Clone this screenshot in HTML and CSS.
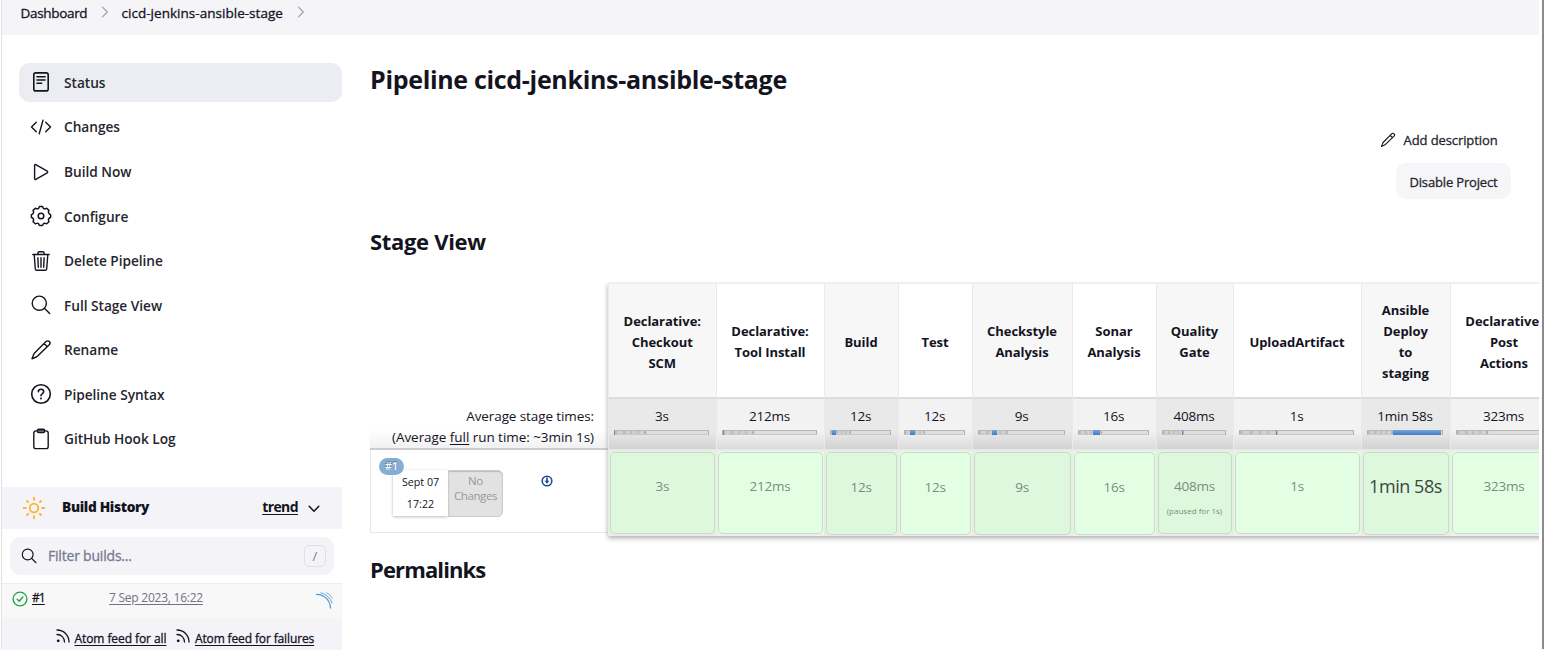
FILE: index.html
```html
<!DOCTYPE html>
<html lang="en">
<head>
<meta charset="utf-8">
<title>cicd-jenkins-ansible-stage</title>
<link rel="stylesheet" href="styles.css">
</head>
<body>
<div class="page">
  <nav class="crumbs">
    <span class="crumb-home">Dashboard</span>
    <svg class="crumb-sep" width="8" height="12" viewBox="0 0 8 12"><path d="M1.5 1.2 6.3 6 1.5 10.8"/></svg>
    <span class="crumb-job">cicd-jenkins-ansible-stage</span>
    <svg class="crumb-sep" width="8" height="12" viewBox="0 0 8 12"><path d="M1.5 1.2 6.3 6 1.5 10.8"/></svg>
  </nav>
  <div class="columns">
    <aside class="side">
      <ul class="tasks">
        <li class="task active"><svg class="icon" viewBox="0 0 22 22"><rect x="3.8" y="1.9" width="14.4" height="18" rx="2" stroke-width="1.6"/><path d="M6.9 5.8h8.2M6.9 9h8.2M6.9 12.2h4.8" stroke-width="1.4"/></svg>Status</li>
        <li class="task"><svg class="icon" viewBox="0 0 22 22"><path d="M6.3 6.3 1.5 11l4.8 4.7M15.7 6.3l4.8 4.7-4.8 4.7M13 4.2 9.2 17.8"/></svg>Changes</li>
        <li class="task"><svg class="icon" viewBox="0 0 22 22"><path d="M4.6 4.3v13.4c0 .7.6 1 1.2.7l11.4-6.6c.6-.4.6-1.2 0-1.6L5.8 3.6c-.6-.3-1.2 0-1.2.7z"/></svg>Build Now</li>
        <li class="task"><svg class="icon" viewBox="0 0 22 22"><circle cx="11" cy="11" r="2.8" stroke-width="1.5"/><path stroke-width="1.5" d="M8.9 2.7 9.5 1.6h3l.6 1.1c.4 1 1.3 1.4 2.3 1l1.3-.4 2.2 2.1-.4 1.4c-.3 1 .1 1.8 1 2.3l1.1.6v2.7l-1.1.6c-.9.5-1.3 1.3-1 2.3l.4 1.4-2.2 2.1-1.3-.4c-1-.4-1.9 0-2.3 1l-.6 1.1h-3l-.6-1.1c-.4-1-1.3-1.4-2.3-1l-1.3.4-2.2-2.1.4-1.4c.3-1-.1-1.8-1-2.3l-1.1-.6V9.7l1.1-.6c.9-.5 1.3-1.3 1-2.3l-.4-1.4 2.2-2.1 1.3.4c1 .4 1.9 0 2.3-1z"/></svg>Configure</li>
        <li class="task"><svg class="icon" viewBox="0 0 22 22"><path d="M2.8 4.5h16.400M4.2 4.5l1.1 14.3c.1.9.8 1.5 1.6 1.5h8.2c.8 0 1.5-.6 1.6-1.5l1.1-14.3M7.9 4.5V3c0-.8.5-1.3 1.3-1.3h3.6c.8 0 1.3.5 1.3 1.3v1.5M7.9 7.700l.4 9.5M11 7.7v9.5M14.1 7.700l-.4 9.5"/></svg>Delete Pipeline</li>
        <li class="task"><svg class="icon" viewBox="0 0 22 22"><circle cx="9.3" cy="9.2" r="7.1"/><path d="m14.4 14.3 5.3 5.3"/></svg>Full Stage View</li>
        <li class="task"><svg class="icon" viewBox="0 0 22 22"><path d="M16 2.5c.9-.9 2.4-.9 3.3 0 .9.9.9 2.4 0 3.3L7.6 17.1c-.4.4-.9.7-1.4.9L2 19.8l1.7-4.2c.2-.6.5-1.1.9-1.5zM14 4.5l3.3 3.3"/></svg>Rename</li>
        <li class="task"><svg class="icon" viewBox="0 0 22 22"><circle cx="11" cy="11" r="9.3" stroke-width="1.6"/><path stroke-width="1.6" d="M8.3 8.7c.1-1.5 1.2-2.4 2.7-2.4s2.7 1 2.7 2.3c0 1.1-.6 1.7-1.5 2.3-.9.5-1.2 1-1.2 1.900"/><circle class="solid" cx="11" cy="15.5" r="1"/></svg>Pipeline Syntax</li>
        <li class="task"><svg class="icon" viewBox="0 0 22 22"><rect x="3.8" y="2.9" width="14.4" height="17.7" rx="2.2"/><rect x="7.3" y="1.3" width="7.4" height="3.2" rx="1.5"/></svg>GitHub Hook Log</li>
      </ul>
      <section class="history">
        <header class="history-head">
          <svg class="sun" viewBox="0 0 24 24"><circle cx="12" cy="12" r="4.3"/><path d="M12 1v3.5M12 19.5V23M1 12h3.5M19.5 12H23M4.5 4.500l2.2 2.2M17.3 17.300l2.2 2.2M4.5 19.500l2.2-2.2M17.3 6.700l2.2-2.2"/></svg>
          <b class="history-title">Build History</b>
          <a class="trend">trend</a>
          <svg class="chevron" viewBox="0 0 12 8"><path d="m1.2 1.3 4.8 4.9 4.8-4.9"/></svg>
        </header>
        <div class="search">
          <svg class="search-icon" viewBox="0 0 16 16"><circle cx="6.7" cy="6.5" r="5.4"/><path d="m10.6 10.4 4.4 4.3"/></svg>
          <span class="search-hint">Filter builds...</span>
          <kbd class="key">/</kbd>
        </div>
        <div class="build">
          <svg class="ok" viewBox="0 0 16 16"><circle cx="8" cy="8" r="6.9"/><path d="m5.2 8.2 2 2.1 3.6-4.3"/></svg>
          <a class="build-no">#1</a>
          <a class="build-date">7 Sep 2023, 16:22</a>
          <svg class="sonar" viewBox="0 0 17 17"><path stroke-width="1.3" d="M.5 2.3c7.5 0 13.6 5.7 14 13.7"/><path stroke-width="1" d="M5 .9c5.2 1.3 9.3 5 11 10"/><path stroke-width=".8" d="M10.5.8c2.7 1.2 4.8 3.1 6 5.5"/></svg>
        </div>
        <footer class="feeds">
          <svg class="rss" viewBox="0 0 14 14"><circle cx="2.2" cy="11.8" r="1.4"/><path d="M1 5.5c4.3 0 7.5 3.2 7.5 7.5M1 1c6.8 0 12 5.2 12 12"/></svg><a class="feed-all">Atom feed for all</a>
          <svg class="rss" viewBox="0 0 14 14"><circle cx="2.2" cy="11.8" r="1.4"/><path d="M1 5.5c4.3 0 7.5 3.2 7.5 7.5M1 1c6.8 0 12 5.2 12 12"/></svg><a class="feed-fail">Atom feed for failures</a>
        </footer>
      </section>
    </aside>
    <main class="main">
      <h1>Pipeline cicd-jenkins-ansible-stage</h1>
      <div class="actions">
        <a class="describe"><svg class="pencil" viewBox="0 0 22 22"><path d="M16 2.5c.9-.9 2.4-.9 3.3 0 .9.9.9 2.4 0 3.3L7.6 17.1c-.4.4-.9.7-1.4.9L2 19.8l1.7-4.2c.2-.6.5-1.1.9-1.5zM14 4.5l3.3 3.3"/></svg>Add description</a>
        <button class="disable">Disable Project</button>
      </div>
      <h2 class="stage-title">Stage View</h2>
      <div class="stage-view">
        <div class="labels">
          <div class="averages">Average stage times:<br><span class="full-run">(Average <u>full</u> run time: ~3min 1s)</span></div>
          <div class="run">
            <span class="badge">#1</span>
            <div class="when"><span>Sept 07</span><span>17:22</span></div>
            <div class="no-changes">No<br>Changes</div>
            <svg class="download" viewBox="0 0 12 12"><circle cx="6" cy="6" r="4.8"/><path d="M6 3v4.2"/><path class="head" d="M3.5 5.8h5L6 8.8z"/></svg>
          </div>
        </div>
        <div class="stages">
          <div class="stage"><div class="name">Declarative:<br>Checkout<br>SCM</div><div class="avg">3s<div class="bar"><i style="left:-1px;width:1%"></i></div></div><div class="cell"><div class="result">3s</div></div></div>
          <div class="stage"><div class="name">Declarative:<br>Tool Install</div><div class="avg">212ms<div class="bar"><i style="left:1%;width:1%"></i></div></div><div class="cell"><div class="result">212ms</div></div></div>
          <div class="stage"><div class="name">Build</div><div class="avg">12s<div class="bar"><i style="left:3%;width:7%"></i></div></div><div class="cell long"><div class="result">12s</div></div></div>
          <div class="stage"><div class="name">Test</div><div class="avg">12s<div class="bar"><i style="left:10%;width:7%"></i></div></div><div class="cell long"><div class="result">12s</div></div></div>
          <div class="stage"><div class="name">Checkstyle<br>Analysis</div><div class="avg">9s<div class="bar"><i style="left:16%;width:6%"></i></div></div><div class="cell long"><div class="result">9s</div></div></div>
          <div class="stage"><div class="name">Sonar<br>Analysis</div><div class="avg">16s<div class="bar"><i style="left:21.5%;width:10%"></i></div></div><div class="cell long"><div class="result">16s</div></div></div>
          <div class="stage"><div class="name">Quality<br>Gate</div><div class="avg">408ms<div class="bar"><i style="left:32%;width:1.5%"></i></div></div><div class="cell"><div class="result">408ms<small>(paused for 1s)</small></div></div></div>
          <div class="stage"><div class="name">UploadArtifact</div><div class="avg">1s<div class="bar"><i style="left:32%;width:1%"></i></div></div><div class="cell"><div class="result">1s</div></div></div>
          <div class="stage"><div class="name">Ansible<br>Deploy<br>to<br>staging</div><div class="avg">1min 58s<div class="bar"><i style="left:34.5%;width:65%"></i></div></div><div class="cell longest"><div class="result">1min 58s</div></div></div>
          <div class="stage"><div class="name">Declarative:<br>Post<br>Actions</div><div class="avg">323ms<div class="bar"></div></div><div class="cell"><div class="result">323ms</div></div></div>
        </div>
      </div>
      <h2 class="permalinks">Permalinks</h2>
    </main>
  </div>
</div>
<div class="window-edge"></div>
</body>
</html>
```
FILE: styles.css
```css
* { box-sizing: border-box; }
body {
  margin: 0;
  height: 650px;
  display: flex;
  overflow: hidden;
  background: #fefefe;
  color: #14141f;
  font: 14px "Open Sans", "Noto Sans", sans-serif;
}
svg { fill: none; stroke: #14141f; stroke-linecap: round; stroke-linejoin: round; flex: none; display: block; }
.page { border-left: 1px solid #e2e2e4; margin-left: 1px; width: 1538px; flex: none; background: #fff; }
.window-edge { width: 2px; height: 649px; margin-left: 3px; background: #8b8b8b; flex: none; }

/* Medium weight for fonts that only ship regular and semibold */
.crumbs, .actions, .disable, .search-hint, .build-no, .feeds a { -webkit-text-stroke: .3px currentColor; }

.crumbs { height: 35px; padding: 3px 0 0 18.5px; display: flex; background: #f5f5f8; line-height: 20px; font-size: 13.5px; }
.crumb-home { width: 80.5px; letter-spacing: -.32px; }
.crumb-job { width: 175.5px; letter-spacing: .03px; margin-left: .5px; }
.crumb-sep { stroke: #9a9ab0; stroke-width: 1.1; margin: 3px 12px 0 0; }

.columns { display: flex; height: 615px; }
.side { width: 340px; flex: none; }
.tasks { list-style: none; margin: 28px 0 0; padding: 0 0 0 17px; display: grid; gap: 5.9px; height: 396px; grid-auto-rows: 38.7px; }
.task { width: 323px; height: 38.7px; border-radius: 10px; padding: 0 0 0 11px; display: flex; align-items: center; gap: 12px; font-size: 13.7px; font-weight: 600; letter-spacing: -.03px; color: #26262f; }
.task.active { background: #ecedf3; }
.icon { width: 22px; height: 22px; stroke-width: 1.4; }
.active .icon { margin-top: -1px; }
.solid { fill: #14141f; stroke: none; }

.history-head { height: 42px; margin-top: 28px; background: #f3f3f8; display: flex; align-items: center; padding: 0 22px 2px 20px; font-size: 14px; font-weight: 700; }
.sun { width: 24px; height: 24px; stroke: #fbb72c; stroke-width: 1.8; stroke-linecap: butt; margin-top: 2px; }
.history-title { margin: -1px 0 0 16px; letter-spacing: -.33px; flex: 1; font-size: 13.7px; }
.trend { text-decoration: underline; text-underline-offset: 2px; letter-spacing: -.6px; margin-top: -1px; }
.chevron { width: 12px; height: 8px; stroke-width: 1.5; margin: 3px 0 0 10px; }
.search { height: 38px; width: 324px; margin: 8px 0 8px 8px; border-radius: 11px; background: #f3f3f8; display: flex; align-items: center; padding: 0 8px 0 11px; color: #797990; }
.search-icon { width: 16px; height: 16px; stroke-width: 1.2; margin-top: -1px; }
.search-hint { margin: -1px 0 0 11px; letter-spacing: -.2px; flex: 1; }
.key { width: 22px; height: 22px; border: 1px solid #dfdfe9; border-radius: 5px; font: 13px/20px "Open Sans", sans-serif; text-align: center; }
.build { height: 36px; border-top: 1px solid #eee; background: #f8f8f8; display: flex; font-size: 12px; line-height: 16px; padding: 6px 9px 0 10px; }
.build a, .feeds a { text-decoration: underline; text-underline-offset: 2px; }
.ok { width: 16px; height: 16px; stroke: #1ea64b; stroke-width: 1.4; margin-top: 1px; }
.build-no { width: 77px; margin-left: 4px; letter-spacing: -.9px; }
.build-date { flex: 1; color: #73737d; letter-spacing: -.24px; }
.sonar { width: 17px; height: 17px; stroke: #549dd0; margin-top: 2px; }
.feeds { height: 36px; background: #f3f3f8; display: flex; padding: 11px 0 0 54px; font-size: 12px; line-height: 17px; }
.rss { width: 14px; height: 14px; stroke-width: 1.3; margin-top: -1px; }
.rss circle { fill: #14141f; stroke: none; }
.feeds a { margin-left: 4.5px; }
.feed-all { letter-spacing: -.08px; margin-right: 10px; }
.feed-fail { letter-spacing: -.13px; }

.main { flex: 1; min-width: 0; padding-left: 28px; overflow: hidden; }
h1 { margin: 27px 0 0; font-size: 25px; line-height: 34px; letter-spacing: -.32px; font-weight: 700; }
.actions { height: 130px; padding: 35px 28px 0 0; display: flex; flex-direction: column; align-items: flex-end; color: #26262f; font-size: 13px; }
.describe { height: 18px; margin-right: 13.5px; display: flex; align-items: center; letter-spacing: -.1px; }
.pencil { width: 16px; height: 16px; margin: -1px 8px 0 0; stroke-width: 1.5; }
.disable { width: 115px; height: 36px; margin-top: 14px; padding: 1px 0 0; border: 0; border-radius: 10px; background: #f6f6f9; font: 13px "Open Sans", sans-serif; letter-spacing: -.16px; color: #26262f; }
h2 { margin: 0; font-size: 22px; line-height: 30px; font-weight: 700; }
.stage-title { letter-spacing: -.32px; }
.stage-view { display: flex; margin-top: 27px; height: 253px; }
.labels { width: 238px; flex: none; padding-top: 113px; }
.averages { height: 54px; padding: 10px 14px 0 0; text-align: right; font-size: 13.5px; line-height: 21px; letter-spacing: -.1px; border-bottom: 2px solid #ccc; background: linear-gradient(#fff 65%, #f1f1f1); }
.full-run { letter-spacing: -.05px; }
.averages u { text-underline-offset: 2px; }
.run { position: relative; height: 83px; border: solid #e8e8e8; border-width: 0 0 1px 1px; padding: 20px 0 0 22px; display: flex; align-items: flex-start; }
.badge { position: absolute; left: 8px; top: 8px; width: 25px; height: 17px; border-radius: 9px; background: #86add3; color: #fff; font-size: 10.5px; line-height: 17px; font-weight: 600; text-align: center; text-shadow: 0 -1px 1px #567; }
.when { width: 55px; height: 46px; background: #fff; box-shadow: 0 1px 3px #bbb; display: flex; flex-direction: column; text-align: center; font-size: 10.7px; line-height: 22px; padding-top: 1px; }
.no-changes { width: 55px; height: 47px; background: #e2e2e2; border: 1px solid #ccc; border-radius: 0 5px 5px 0; box-shadow: inset 0 1px 1px #bbb; text-align: center; color: #999; font-size: 11.5px; line-height: 15px; letter-spacing: -.4px; padding-top: 2px; }
.download { width: 12px; height: 12px; margin: 5px 0 0 38px; stroke: #204d8f; stroke-width: 1.6; }
.download .head { fill: #204d8f; stroke: none; }

.stages { display: grid; grid-template-columns: 107.5px 108px 74px 74px 100px 84px 77px 128px 89px 108px; flex: none; box-shadow: 0 2px 5px #aaa; height: 253px; text-align: center; clip-path: inset(-1px -1px -8px -4px); }
.stage { display: grid; grid-template-rows: 114px 54px 85px; border-left: 1px solid #eaeaea; background: #fff; }
.stage:nth-child(odd) { background: #f7f7f7; }
.name { display: flex; align-items: center; justify-content: center; border-top: 1px solid #eee; padding-top: 3px; font-size: 13px; font-weight: 700; line-height: 21px; letter-spacing: -.05px; }
.avg { margin-bottom: 2px; border-top: 2px solid #dcdcdc; background: linear-gradient(#f2f2f2 65%, #dadada); padding: 7px 7px 0 6px; font-size: 13.5px; line-height: 21px; letter-spacing: -.25px; box-shadow: 0 2px #e9e9e9; }
.stage:nth-child(odd) .avg { background: linear-gradient(#e9e9e9 65%, #d2d2d2); }
.bar { position: relative; height: 5px; margin: 3px 0 0 -1px; border: 1px solid #bbb; border-color: #b9b9b9 #b0b0b0 #c8c8c8; background: linear-gradient(90deg, #bbb 2%, #d0d0d0 3% 8%, #bbb 9% 11%, #d0d0d0 12% 16%, #bbb 17% 18%, #d0d0d0 19% 23%, #c2c2c2 24% 26%, #d3d3d3 27% 31%, #aaa 32% 33%, #dedede 34%); }
.bar i { position: absolute; top: -1px; height: 5px; min-width: 1px; background: linear-gradient(#74a5d8, #3f7cc8); }
.cell { padding: 1px 1px 2px; background: linear-gradient(#e2fbe2 94%, #efefef); }
.result { height: 82px; display: flex; flex-direction: column; align-items: center; position: relative; padding-top: 23px; border: 1px solid #cfd6cf; border-radius: 5px; background: #e3ffe3; color: #7b8c7b; font-size: 13.5px; line-height: 21px; letter-spacing: -.25px; }
.stage:nth-child(odd) .cell { background: linear-gradient(#def5de 94%, #ebebeb); }
.stage:nth-child(odd) .result { background: #ddf8dd; }
.long .result { height: 83px; padding-top: 24px; }
.longest .result { height: 83px; font-size: 18px; color: #3c473c; letter-spacing: -.45px; white-space: nowrap; }
.result small { font-size: 8px; line-height: 12px; letter-spacing: 0; margin-top: 8px; }
.permalinks { margin-top: 18px; letter-spacing: -.88px; }
```
